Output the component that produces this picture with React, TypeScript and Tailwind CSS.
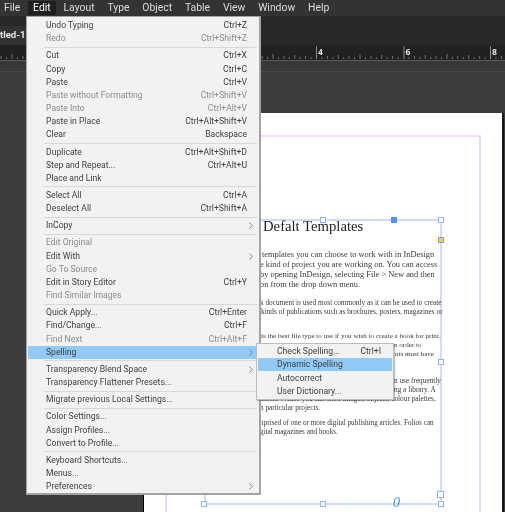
import React from "react";

type Item = { l: string; s?: string; d?: boolean; sub?: boolean; hi?: boolean };

const groups: Item[][] = [
  [{ l: "Undo Typing", s: "Ctrl+Z" }, { l: "Redo", s: "Ctrl+Shift+Z", d: true }],
  [
    { l: "Cut", s: "Ctrl+X" },
    { l: "Copy", s: "Ctrl+C" },
    { l: "Paste", s: "Ctrl+V" },
    { l: "Paste without Formatting", s: "Ctrl+Shift+V", d: true },
    { l: "Paste Into", s: "Ctrl+Alt+V", d: true },
    { l: "Paste in Place", s: "Ctrl+Alt+Shift+V" },
    { l: "Clear", s: "Backspace" },
  ],
  [{ l: "Duplicate", s: "Ctrl+Alt+Shift+D" }, { l: "Step and Repeat...", s: "Ctrl+Alt+U" }, { l: "Place and Link" }],
  [{ l: "Select All", s: "Ctrl+A" }, { l: "Deselect All", s: "Ctrl+Shift+A" }],
  [{ l: "InCopy", sub: true }],
  [
    { l: "Edit Original", d: true },
    { l: "Edit With", sub: true },
    { l: "Go To Source", d: true },
    { l: "Edit in Story Editor", s: "Ctrl+Y" },
    { l: "Find Similar Images", d: true },
  ],
  [
    { l: "Quick Apply...", s: "Ctrl+Enter" },
    { l: "Find/Change...", s: "Ctrl+F" },
    { l: "Find Next", s: "Ctrl+Alt+F", d: true },
    { l: "Spelling", sub: true, hi: true },
  ],
  [{ l: "Transparency Blend Space", sub: true }, { l: "Transparency Flattener Presets..." }],
  [{ l: "Migrate previous Local Settings..." }],
  [{ l: "Color Settings..." }, { l: "Assign Profiles..." }, { l: "Convert to Profile..." }],
  [{ l: "Keyboard Shortcuts..." }, { l: "Menus..." }, { l: "Preferences", sub: true }],
];

const topMenus = ["File", "Edit", "Layout", "Type", "Object", "Table", "View", "Window", "Help"];

function Chevron() {
  return (
    <svg width="4" height="7" viewBox="0 0 4 7" className="shrink-0">
      <path d="M0.5 0.5 L3.3 3.5 L0.5 6.5" fill="none" stroke="#777" strokeWidth="0.9" />
    </svg>
  );
}

function Row({ item }: { item: Item }) {
  return (
    <div
      className={`flex h-[13.17px] items-center justify-between pl-[18px] ${item.sub ? "pr-[4px]" : "pr-[10px]"} ${
        item.hi ? "bg-[#91c9f7]" : ""
      } ${item.d ? "text-[#8c8c8c]" : "text-[#3f3f3f]"}`}
    >
      <span>{item.l}</span>
      {item.s && <span>{item.s}</span>}
      {item.sub && <Chevron />}
    </div>
  );
}

function Ruler() {
  const ticks: React.ReactNode[] = [];
  const step = 87 / 16;
  for (let i = -60; i < 36; i++) {
    const x = 316 + i * step;
    const m = ((i % 16) + 16) % 16;
    const h = m === 0 ? 0 : m % 8 === 0 ? 5 : m % 4 === 0 ? 4 : m % 2 === 0 ? 3 : 2;
    if (h > 0) ticks.push(<rect key={i} x={x} y={14 - h} width="1" height={h} fill="#707070" />);
  }
  return (
    <svg width="505" height="15" className="block">
      {ticks}
      {[316, 403.5, 490].map((x) => (
        <rect key={x} x={x} y="1" width="1" height="13" fill="#8a8a8a" />
      ))}
      {[
        [318, "4"],
        [405.5, "6"],
        [492, "8"],
      ].map(([x, t]) => (
        <text key={t as string} x={x as number} y="9.5" fontSize="8.5" fontWeight="700" fill="#e4e4e4" fontFamily="'Open Sans', sans-serif">
          {t}
        </text>
      ))}
    </svg>
  );
}

function Handle({ cls }: { cls: string }) {
  return <div className={`absolute h-[6px] w-[6px] border border-[#8fb4ff] bg-white ${cls}`} />;
}

export default function App() {
  return (
    <div className="relative flex h-[512px] w-[505px] flex-col overflow-hidden bg-[#3c3c3c] font-['Roboto',sans-serif] blur-[0.25px]">
      {/* menu bar */}
      <div className="flex h-[16px] shrink-0 items-center bg-[#333333] text-[10.4px] text-[#dcdcdc]">
        {topMenus.map((m) => (
          <div
            key={m}
            className={`mr-[2.8px] flex h-[14px] items-center px-[5px] first:ml-[-1px] ${m === "Edit" ? "bg-[#1f1f1f] text-white" : ""}`}
          >
            {m}
          </div>
        ))}
      </div>

      {/* tab row */}
      <div className="flex h-[29px] shrink-0 items-end bg-[#282828]">
        <div className="flex h-[19px] w-[26px] items-center bg-[#323232] text-[9.5px] font-bold text-[#e8e8e8]">
          <span className="whitespace-nowrap">tled-1</span>
        </div>
      </div>

      {/* ruler */}
      <div className="h-[15px] shrink-0 bg-[#212121]">
        <Ruler />
      </div>
      <div className="h-[1px] shrink-0 bg-[#5a5a5a]" />
      <div className="h-[10px] shrink-0 bg-[#383838]" />
      <div className="h-[1px] shrink-0 bg-[#484848]" />

      {/* canvas */}
      <div className="min-h-0 flex-1 overflow-hidden pl-[143px] pt-[41px]">
        <div className="relative h-[420px] w-[361px] border-l border-r-2 border-l-black border-r-[#161616] bg-white pl-[60px] pt-[106px]">
          {/* margin guides */}
          <div className="absolute left-[21px] right-[21px] top-[22px] h-[400px] border-x-2 border-t-2 border-x-[#e3dafb] border-t-[#f8d9f8]" />

          {/* text frame */}
          <div className="relative h-[286px] w-[238px] border-2 border-[#cfdbff] pl-[54px] font-['Liberation_Serif',serif] text-[#3a3a3a]">
            <div className="ml-[3px] mt-[-3px] h-[16px] whitespace-nowrap text-[14.7px] leading-[16px] text-[#222]">Defalt Templates</div>

            <div className="mt-[16px] whitespace-nowrap text-[8.4px] leading-[10.1px]">
              <div className="ml-[2px]">templates you can choose to work with in InDesign</div>
              <div>e kind of project you are working on. You can access</div>
              <div>by opening InDesign, selecting File &gt; New and then</div>
              <div>on from the drop down menu.</div>
            </div>

            <div className="mt-[8px] whitespace-nowrap text-[7.3px] leading-[9px]">
              <div>k document is used most commonly as it can be used to create</div>
              <div className="ml-[1px]">kinds of publications such as brochures, posters, magazines or</div>
            </div>

            <div className="mt-[16px] whitespace-nowrap text-[7.1px] leading-[9px]">
              <div className="ml-[1px]">is the best file type to use if you wish to create a book for print.</div>
              <div className="ml-[134px]">n order to</div>
              <div className="ml-[135px]">nts must have</div>
            </div>

            <div className="mt-[17px] whitespace-nowrap text-[7.3px] leading-[9px]">
              <div className="ml-[134px]">n use frequently</div>
              <div className="ml-[134px]">ng a library. A</div>
              <div>assets. Where you can store images, objects, colour palettes,</div>
              <div>n particular projects.</div>
            </div>

            <div className="mt-[7px] whitespace-nowrap text-[7.2px] leading-[9px]">
              <div className="ml-[-2px]">mprised of one or more digital publishing articles. Folios can</div>
              <div>gital magazines and books.</div>
            </div>

            {/* handles */}
            <Handle cls="left-[114px] top-[-4px]" />
            <div className="absolute left-[185px] top-[-4px] h-[6px] w-[6px] bg-[#4d94ff]" />
            <Handle cls="right-[-4px] top-[-4px]" />
            <div className="absolute right-[-4px] top-[16px] h-[6px] w-[6px] border border-[#6f9dff] bg-[#ffd400]" />
            <Handle cls="right-[-4px] top-[138px]" />
            <Handle cls="right-[-4px] bottom-[5px] h-[7px] w-[7px]" />
            <Handle cls="right-[-4px] bottom-[-4px]" />
            <Handle cls="left-[114px] bottom-[-4px]" />
            <Handle cls="left-[-5px] bottom-[-4px]" />
            <span className="absolute bottom-[-7px] left-[187px] font-['Liberation_Serif',serif] text-[14px] italic leading-[14px] text-[#3b8cf5]">0</span>
          </div>
        </div>
      </div>

      {/* Edit menu */}
      <div className="absolute left-[26px] top-[16px] w-[235px] border border-b-2 border-r-2 border-[#a3a3a3] bg-[#f2f2f2] pt-[2px] pl-[1px] pr-[2px] text-[8.6px]">
        {groups.map((g, i) => (
          <div key={i}>
            {i > 0 && (
              <div className="flex h-[4px] items-center pl-[16px]">
                <div className="h-[1px] w-full bg-[#d8d8d8]" />
              </div>
            )}
            {g.map((it) => (
              <Row key={it.l} item={it} />
            ))}
          </div>
        ))}
      </div>

      {/* Spelling submenu */}
      <div className="absolute left-[256px] top-[343px] w-[138px] border border-[#bdbdbd] bg-[#f2f2f2] p-[1px] text-[8.6px] text-[#3f3f3f] shadow-[1px_1px_1px_rgba(0,0,0,0.25)]">
        <div className="flex h-[13.2px] items-center justify-between pl-[19px] pr-[11px]">
          <span>Check Spelling...</span>
          <span>Ctrl+I</span>
        </div>
        <div className="flex h-[13.2px] items-center bg-[#91c9f7] pl-[19px]">Dynamic Spelling</div>
        <div className="flex h-[13.2px] items-center pl-[19px]">Autocorrect</div>
        <div className="flex h-[13.2px] items-center pl-[19px]">User Dictionary...</div>
      </div>
    </div>
  );
}
